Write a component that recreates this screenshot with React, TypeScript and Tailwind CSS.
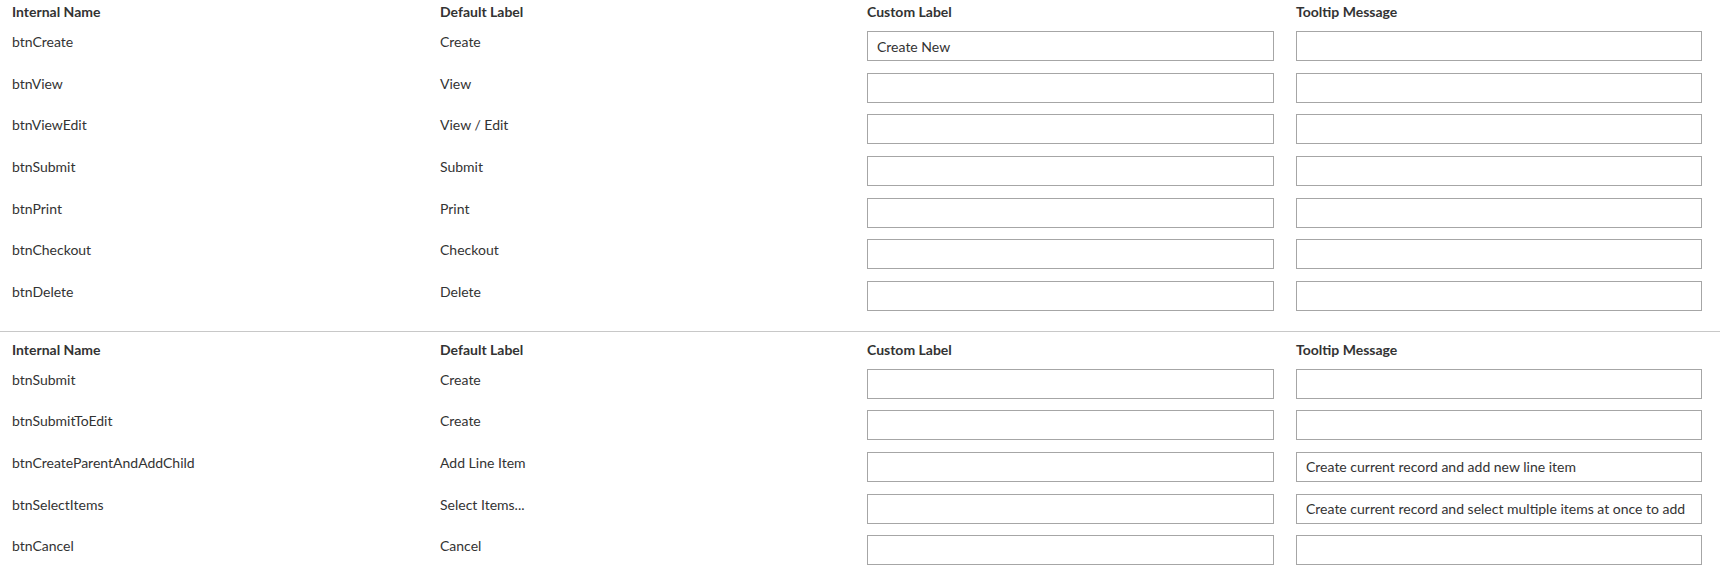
import React from 'react'

interface ButtonRow {
  name: string
  label: string
  custom?: string
  tooltip?: string
}

const primaryButtons: ButtonRow[] = [
  { name: 'btnCreate', label: 'Create', custom: 'Create New' },
  { name: 'btnView', label: 'View' },
  { name: 'btnViewEdit', label: 'View / Edit' },
  { name: 'btnSubmit', label: 'Submit' },
  { name: 'btnPrint', label: 'Print' },
  { name: 'btnCheckout', label: 'Checkout' },
  { name: 'btnDelete', label: 'Delete' },
]

const childButtons: ButtonRow[] = [
  { name: 'btnSubmit', label: 'Create' },
  { name: 'btnSubmitToEdit', label: 'Create' },
  {
    name: 'btnCreateParentAndAddChild',
    label: 'Add Line Item',
    tooltip: 'Create current record and add new line item',
  },
  {
    name: 'btnSelectItems',
    label: 'Select Items...',
    tooltip: 'Create current record and select multiple items at once to add',
  },
  { name: 'btnCancel', label: 'Cancel' },
]

function TextField({ value }: { value?: string }) {
  return (
    <input
      type="text"
      defaultValue={value ?? ''}
      className="h-[30px] w-full border border-[#a6a6a6] bg-white px-[9px] text-[14px] text-[#333333] outline-none focus:border-[#0078d4]"
    />
  )
}

function ButtonTable({ rows }: { rows: ButtonRow[] }) {
  return (
    <div>
      {/* Header */}
      <div className="flex h-[31px] pl-[12px] text-[14px] font-bold leading-[24px] text-[#333333]">
        <div className="w-[428px]">Internal Name</div>
        <div className="w-[427px]">Default Label</div>
        <div className="w-[429px]">Custom Label</div>
        <div>Tooltip Message</div>
      </div>

      {rows.map((row, i) => (
        <div key={i} className="flex h-[41.67px] items-start pl-[12px] text-[14px] leading-[20px] text-[#333333]">
          <div className="w-[428px] pt-[1px]">{row.name}</div>
          <div className="w-[427px] pt-[1px]">{row.label}</div>
          <div className="mr-[22px] w-[407px]">
            <TextField value={row.custom} />
          </div>
          <div className="w-[406px]">
            <TextField value={row.tooltip} />
          </div>
        </div>
      ))}
    </div>
  )
}

export default function App() {
  return (
    <div className="min-h-screen bg-white font-['Lato',_'Liberation_Sans',_sans-serif]">
      <ButtonTable rows={primaryButtons} />
      <div className="mt-[8px] border-t border-[#c8c8c8] pt-[6px]">
        <ButtonTable rows={childButtons} />
      </div>
    </div>
  )
}
